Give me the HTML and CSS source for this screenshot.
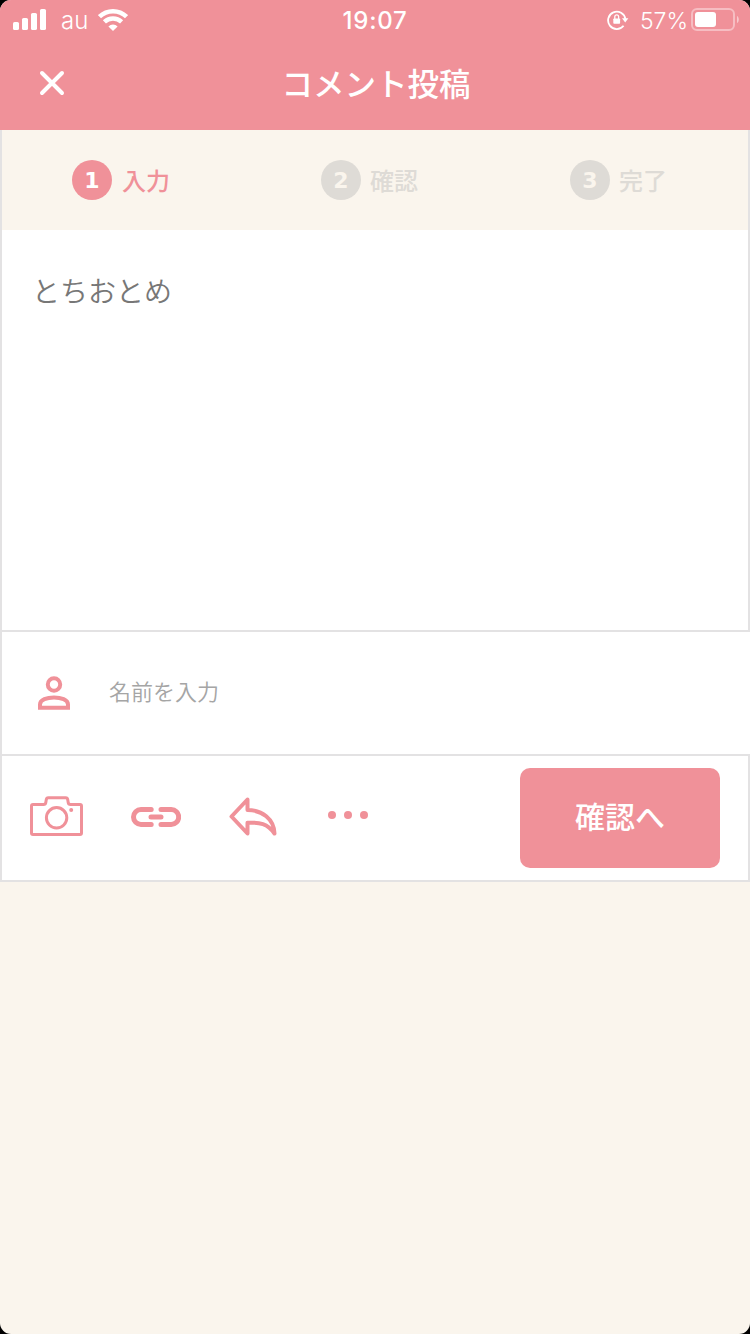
FILE: index.html
```html
<!DOCTYPE html>
<html lang="ja">
<head>
    <meta charset="UTF-8">
    <meta name="viewport" content="width=device-width, initial-scale=1.0">
    <title>コメント投稿</title>
    <link rel="stylesheet" href="styles.css">
</head>
<body>
    <div class="screen">
        <header class="header">
            <div class="status">
                <div class="status-left">
                    <svg class="signal" width="34" height="22" viewBox="0 0 34 22" fill="#fff">
                        <rect x="0" y="13" width="6" height="8" rx="1.6"/>
                        <rect x="9" y="9" width="6" height="12" rx="1.6"/>
                        <rect x="18" y="4" width="6" height="17" rx="1.6"/>
                        <rect x="27" y="0" width="6" height="21" rx="1.6"/>
                    </svg>
                    <span class="carrier">au</span>
                    <svg class="wifi" width="30" height="22" viewBox="0 0 30 22" fill="none" stroke="#fff" stroke-width="4.4">
                        <path d="M1.5 7.7a19.4 19.4 0 0 1 27 0"/>
                        <path d="M6.4 12.9a12.4 12.4 0 0 1 17.2 0"/>
                        <path d="M15 22l-4.6-4.6a6.5 6.5 0 0 1 9.2 0z" fill="#fff" stroke="none"/>
                    </svg>
                </div>
                <span class="time">19:07</span>
                <div class="status-right">
                    <svg class="lock" width="22" height="22" viewBox="0 0 22 22" fill="none" stroke="#fff" stroke-width="1.8">
                        <path d="M16.6 16.8a8.7 8.7 0 1 1 1.8-6.8"/>
                        <path d="M15 9.2h6.4l-3.2 4.4z" fill="#fff" stroke="none"/>
                        <rect x="6.3" y="9.5" width="6.8" height="5.3" rx="0.8" fill="#fff" stroke="none"/>
                        <path d="M7.8 10V7.8a1.9 1.9 0 0 1 3.8 0V10" stroke-width="1.3"/>
                    </svg>
                    <span class="percent">57%</span>
                    <svg class="battery" width="49" height="24" viewBox="0 0 49 24">
                        <rect x="1" y="1" width="42" height="21" rx="5" fill="none" stroke="#fff" stroke-opacity="0.4" stroke-width="2"/>
                        <rect x="4" y="4" width="21" height="15" rx="3" fill="#fff"/>
                        <path d="M46 8c2.4 1 2.4 6 0 7z" fill="#fff" fill-opacity="0.5"/>
                    </svg>
                </div>
            </div>
            <div class="title-bar">
                <svg class="close" width="26" height="26" viewBox="0 0 26 26" stroke="#fff" stroke-width="4" stroke-linecap="round">
                    <path d="M3 3l20 20M23 3L3 23"/>
                </svg>
                <h1>コメント投稿</h1>
            </div>
        </header>

        <main>
            <ol class="steps">
                <li class="step active"><span class="num">1</span><span class="label">入力</span></li>
                <li class="step"><span class="num">2</span><span class="label">確認</span></li>
                <li class="step"><span class="num">3</span><span class="label">完了</span></li>
            </ol>
            <div class="comment">とちおとめ</div>
            <div class="name">
                <svg width="32" height="34" viewBox="0 0 32 34" fill="none" stroke="#f09199" stroke-width="4">
                    <circle cx="16" cy="8.5" r="6.2"/>
                    <path d="M2 31.7v-3.2C2 19 30 19 30 28.500v3.2z"/>
                </svg>
                <span>名前を入力</span>
            </div>
            <div class="tools">
                <svg class="camera" width="54" height="41" viewBox="0 0 54 41" fill="none" stroke="#f09199" stroke-width="3" stroke-linejoin="round">
                    <path d="M3 8.5h10.5q2 0 2.3-2l.5-3q.3-1.800 2-1.800h17.4q1.7 0 2 1.800l.5 3q.3 2 2.3 2H50q1.5 0 1.5 1.5v27q0 1.5-1.5 1.5H3q-1.5 0-1.5-1.5V10q0-1.5 1.5-1.5z"/>
                    <circle cx="26.6" cy="21.8" r="10.2"/>
                    <circle cx="41.2" cy="14" r="2" fill="#f09199" stroke="none"/>
                </svg>
                <svg class="link" width="50" height="20" viewBox="0 0 50 20" fill="none" stroke="#f09199" stroke-width="5" stroke-linecap="round">
                    <path d="M20.2 2.5H10a7.5 7.5 0 0 0 0 15h10.2M30 2.5h10.2a7.5 7.5 0 0 1 0 15H30M20 10h10"/>
                </svg>
                <svg class="reply" width="48" height="39" viewBox="0 0 48 39" fill="none" stroke="#f09199" stroke-width="4" stroke-linejoin="round">
                    <path d="M18.5 2.500L2.500 19.500l16 17V25.800c12-.8 20 .5 27 10.700C45 22 33 13 18.500 13z"/>
                </svg>
                <svg class="more" width="40" height="8" viewBox="0 0 40 8" fill="#f09199">
                    <circle cx="4" cy="4" r="4"/>
                    <circle cx="20" cy="4" r="4"/>
                    <circle cx="36" cy="4" r="4"/>
                </svg>
                <button class="submit">確認へ</button>
            </div>
        </main>
    </div>
</body>
</html>
```

FILE: styles.css
```css
* {
    box-sizing: border-box;
}
body {
    margin: 0;
    background: #000;
    font-family: "Noto Sans CJK JP", sans-serif;
}
.screen {
    height: 1334px;
    background: #faf5ed;
    border-radius: 11px;
    overflow: hidden;
}
.header {
    height: 130px;
    background: #f09199;
    color: #fff;
}
.status {
    display: grid;
    grid-template-columns: 1fr auto 1fr;
    height: 40px;
    padding: 0 10px 0 13px;
    align-items: center;
    font-family: Inter, sans-serif;
    font-size: 24px;
    line-height: 40px;
}
.status-left,
.status-right {
    display: flex;
    align-items: center;
}
.status-right {
    justify-content: flex-end;
}
.signal,
.wifi,
.battery {
    margin-bottom: 2px;
}
.lock {
    margin-bottom: 1px;
}
.carrier {
    margin: 1px 10px 0 14px;
    font-weight: 350;
}
.time {
    margin: 1px 3px 0 0;
    font-weight: 500;
    letter-spacing: 0.8px;
}
.percent {
    margin: 1px 3px 0 11px;
    font-size: 23px;
    font-weight: 350;
}
.title-bar {
    display: grid;
    grid-template-columns: 90px 1fr 90px;
    height: 86px;
    align-items: center;
}
.close {
    margin-left: 39px;
}
h1 {
    margin: -2px 0 0 2px;
    font-size: 31.5px;
    font-weight: 500;
    text-align: center;
}
.steps {
    display: grid;
    grid-template-columns: repeat(3, 249px);
    height: 100px;
    margin: 0;
    padding: 0;
    list-style: none;
    border: solid #e3e2e3;
    border-width: 0 2px;
}
.step {
    display: flex;
    align-items: center;
    padding-left: 70px;
    color: #dedbd6;
    font-size: 24px;
    font-weight: 500;
}
.step.active {
    color: #f09199;
}
.label {
    margin-top: -2px;
}
.num {
    width: 40px;
    height: 40px;
    margin-right: 9px;
    border-radius: 50%;
    background: #dedbd6;
    color: #faf5ed;
    font: bold 22px/42px "DejaVu Sans", sans-serif;
    text-align: center;
}
.active .num {
    margin-right: 10px;
    background: #f09199;
    color: #fff;
}
.comment {
    height: 402px;
    padding: 39px 30px;
    background: #fff;
    border: solid #e3e2e3;
    border-width: 0 2px 2px;
    color: #777;
    font-size: 28px;
    font-weight: 350;
    line-height: 42px;
}
.name {
    display: flex;
    align-items: center;
    height: 124px;
    padding-left: 36px;
    background: #fff;
    border: solid #e3e2e3;
    border-width: 0 0 2px 2px;
    color: #a5a5a5;
    font-size: 22px;
    font-weight: 350;
}
.name span {
    margin: -7px 0 0 39px;
}
.tools {
    display: flex;
    align-items: center;
    height: 126px;
    padding: 0 28px;
    background: #fff;
    border: solid #e3e2e3;
    border-width: 0 2px 2px;
}
.camera {
    margin-bottom: 4px;
}
.link {
    margin: 0 0 2px 47px;
}
.reply {
    margin: 0 0 4px 48px;
}
.more {
    margin: 0 0 6px 51px;
}
.submit {
    width: 200px;
    height: 100px;
    margin-left: auto;
    padding: 0 0 7px;
    border: none;
    border-radius: 10px;
    background: #f09199;
    color: #fff;
    font-family: inherit;
    font-size: 30px;
    font-weight: 500;
}
```
